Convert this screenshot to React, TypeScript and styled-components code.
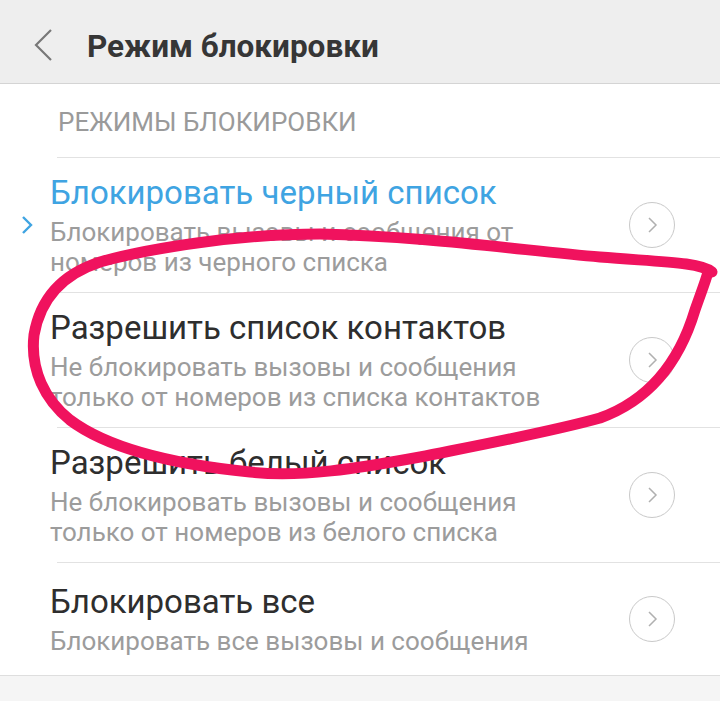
import styled, {createGlobalStyle} from "styled-components";

const GlobalStyle = createGlobalStyle`
  html, body {
    margin: 0;
    padding: 0;
    background: #f5f5f5;
  }
  body {
    font-family: Roboto, "Noto Sans", "Liberation Sans", sans-serif;
  }
`

const Page = styled.div`
  position: relative;
  width: 720px;
  height: 701px;
  overflow: hidden;
  background: #f5f5f5;
`

const Header = styled.div`
  box-sizing: border-box;
  height: 84px;
  padding: 10px 0 0 33px;
  display: flex;
  align-items: center;
  background: #eeeeee;
  border-bottom: 1px solid #d4d4d4;
`

const BackButton = styled.svg`
  width: 22px;
  height: 34px;
  margin-right: 32px;
  margin-top: -3px;
`

const HeaderTitle = styled.div`
  font-size: 31.5px;
  line-height: 36px;
  font-weight: 700;
  color: #363636;
`

const Content = styled.div`
  background: #fff;
  border-bottom: 1px solid #dedede;
`

const SectionLabel = styled.div`
  box-sizing: border-box;
  height: 73px;
  padding: 22px 0 0 58px;
  font-size: 26px;
  line-height: 33px;
  color: #9a9a9a;
`

const Row = styled.div<{ $last?: boolean }>`
  box-sizing: border-box;
  min-height: ${p => p.$last ? 113 : 135}px;
  padding: 16px 45px 15px 20px;
  display: flex;
  align-items: center;
  background: linear-gradient(#e2e2e2, #e2e2e2) no-repeat 57px 0 / calc(100% - 57px) 1px;
`

const Marker = styled.div`
  width: 30px;
  flex: none;
  display: flex;
  align-items: center;
`

const RowText = styled.div`
  flex: 1;
`

const RowTitle = styled.div<{ $active?: boolean }>`
  font-size: 33px;
  line-height: 40px;
  color: ${p => p.$active ? "#3fa4e2" : "#2e2e2e"};
`

const RowSub = styled.div`
  margin-top: 4px;
  font-size: 26px;
  line-height: 30px;
  color: #9c9c9c;
`

const CircleArrow = styled.div`
  box-sizing: border-box;
  width: 46px;
  height: 46px;
  flex: none;
  border: 1.5px solid #c9c9c9;
  border-radius: 50%;
  display: flex;
  align-items: center;
  justify-content: center;
`

const Annotation = styled.svg`
  position: absolute;
  left: 0;
  top: 0;
  width: 720px;
  height: 701px;
  pointer-events: none;
`

const rows = [
    {title: "Блокировать черный список", sub: ["Блокировать вызовы и сообщения от", "номеров из черного списка"], active: true},
    {title: "Разрешить список контактов", sub: ["Не блокировать вызовы и сообщения", "только от номеров из списка контактов"]},
    {title: "Разрешить белый список", sub: ["Не блокировать вызовы и сообщения", "только от номеров из белого списка"]},
    {title: "Блокировать все", sub: ["Блокировать все вызовы и сообщения"]},
]

const App = () => {
    return (
        <Page>
            <GlobalStyle/>
            <Header>
                <BackButton viewBox="0 0 22 34">
                    <path d="M18 2 L3 17 L18 32" fill="none" stroke="#787878" strokeWidth="2.2"/>
                </BackButton>
                <HeaderTitle>Режим блокировки</HeaderTitle>
            </Header>
            <Content>
                <SectionLabel>РЕЖИМЫ БЛОКИРОВКИ</SectionLabel>
                {rows.map((r, i) => (
                    <Row key={i} $last={i === rows.length - 1}>
                        <Marker>
                            {r.active && (
                                <svg width="14" height="20" viewBox="0 0 14 20">
                                    <path d="M3 2 L11 10 L3 18" fill="none" stroke="#3fa4e2" strokeWidth="2.4"/>
                                </svg>
                            )}
                        </Marker>
                        <RowText>
                            <RowTitle $active={r.active}>{r.title}</RowTitle>
                            <RowSub>
                                {r.sub.map((s, j) => <div key={j}>{s}</div>)}
                            </RowSub>
                        </RowText>
                        <CircleArrow>
                            <svg width="12" height="18" viewBox="0 0 12 18">
                                <path d="M3 2 L10 9 L3 16" fill="none" stroke="#b0b0b0" strokeWidth="1.5"/>
                            </svg>
                        </CircleArrow>
                    </Row>
                ))}
            </Content>
            {/* hand-drawn highlight over the list */}
            <Annotation viewBox="0 0 720 701">
                <path
                    d="M712 272 C700 262 660 262 600 257 C520 250 420 236 320 234 C240 234 150 248 100 262 C60 275 40 300 34 335 C30 370 45 400 70 420 C110 450 180 465 250 472 C300 478 360 468 420 457 C480 445 550 432 600 418 C650 400 680 360 695 310 C702 290 706 280 708 272"
                    fill="none" stroke="#f0125e" strokeWidth="11" strokeLinecap="round" strokeLinejoin="round"/>
            </Annotation>
        </Page>
    )
}

export default App
